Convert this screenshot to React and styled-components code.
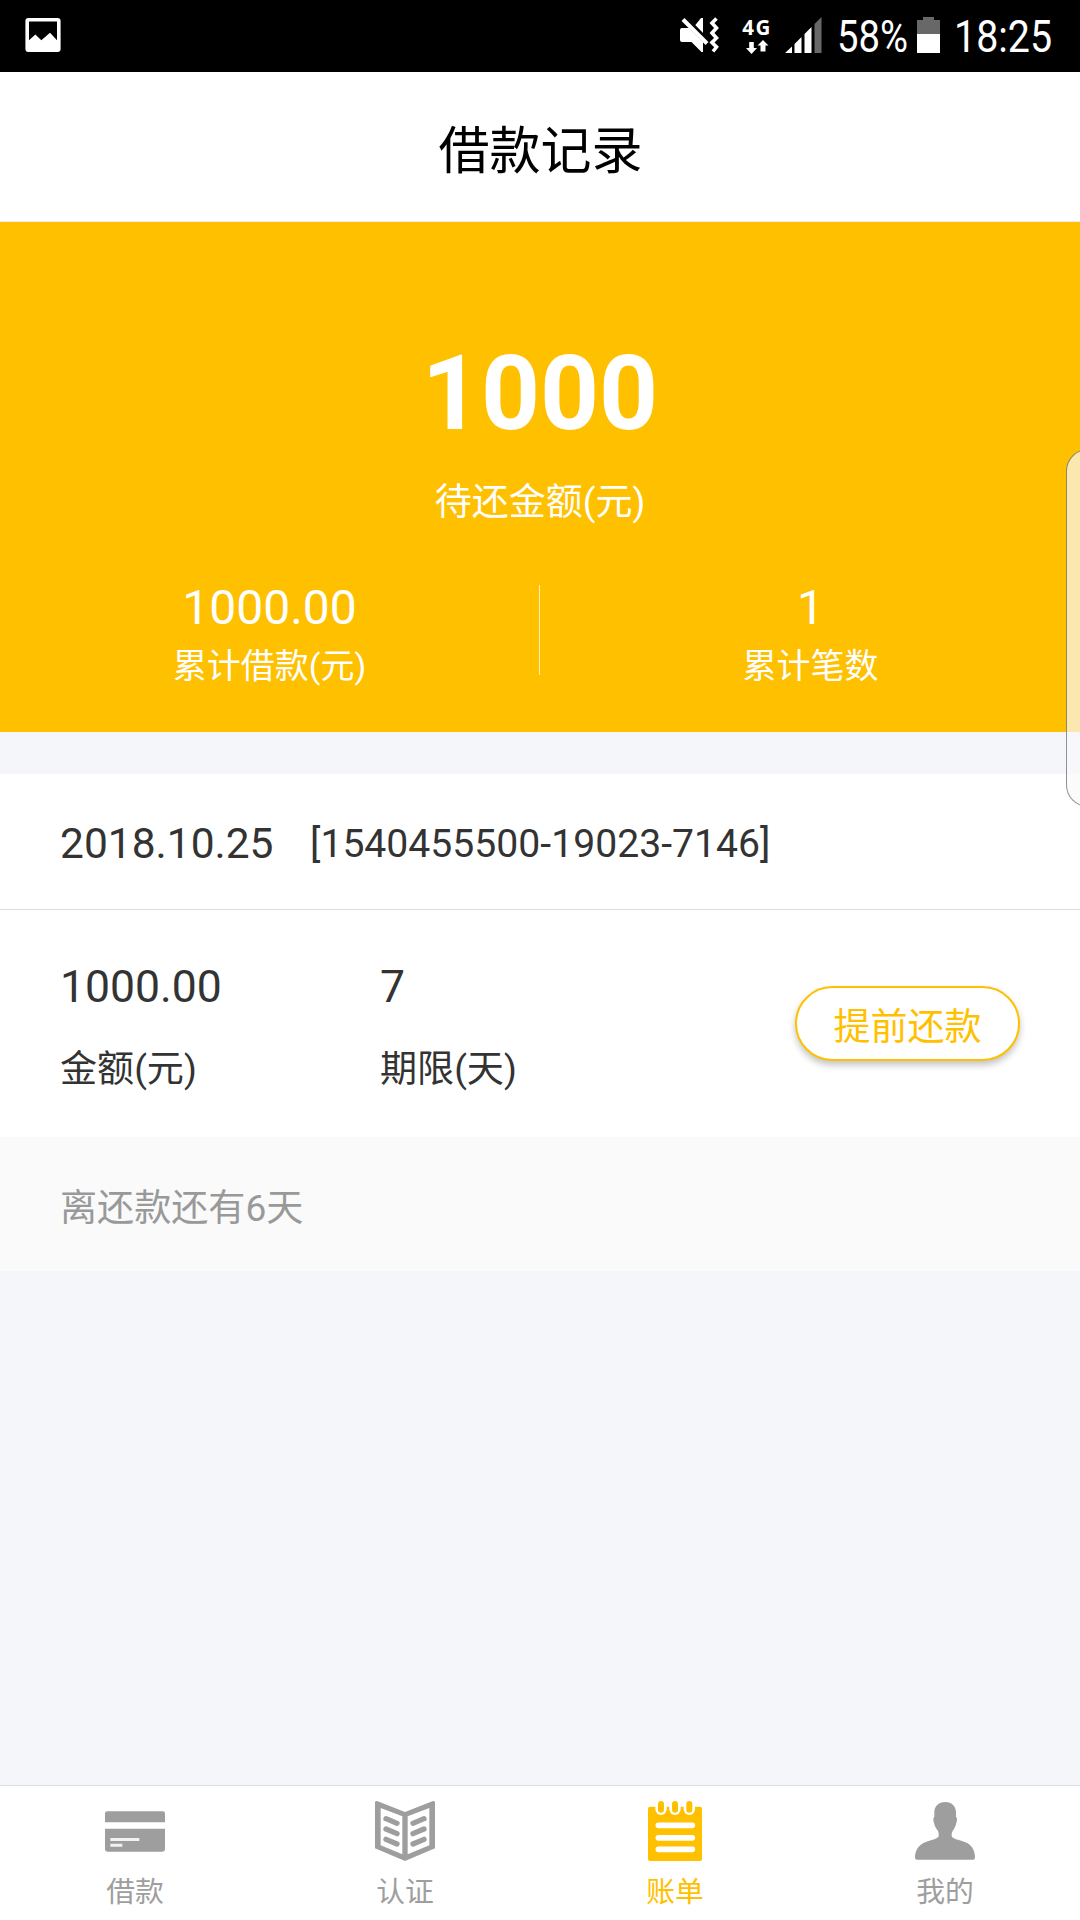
import styled, { createGlobalStyle } from 'styled-components';

const GlobalStyle = createGlobalStyle`
  * {
    box-sizing: border-box;
  }
  body {
    --primary-clr: #ffc000;
    --text-clr: #333;
    --muted-clr: #9e9e9e;
    margin: 0;
    background: #f4f6fa;
    font-family: Roboto, 'Noto Sans CJK SC', sans-serif;
    color: var(--text-clr);
  }
`;

const Screen = styled.div`
  position: relative;
  display: flex;
  flex-direction: column;
  width: 1080px;
  height: 1920px;
  overflow: hidden;

  svg {
    display: block;
    flex: none;
  }
`;

const StatusBar = styled.div`
  display: flex;
  align-items: center;
  height: 72px;
  padding: 0 28px 2px 25px;
  background: #000;
  color: #fff;
`;

const StatusIcons = styled.div`
  display: flex;
  align-items: center;
  margin-left: auto;
`;

const Network = styled.div`
  display: flex;
  flex-direction: column;
  align-items: center;
  width: 30px;
  height: 36px;
  margin: 0 13px 0 23px;
  font-family: 'Noto Sans', sans-serif;
  font-size: 20.5px;
  font-weight: 700;
  line-height: 20px;
  letter-spacing: 1.5px;

  svg {
    margin-top: 3px;
  }
`;

/* condensed digits of the system bar */
const StatusText = styled.div`
  width: ${({ $width }) => $width}px;
  margin-left: ${({ $gap }) => $gap}px;
  font-size: 45px;
  line-height: 52px;
  white-space: nowrap;
  padding-top: 3px;

  span {
    display: inline-block;
    transform: scaleX(${({ $scale }) => $scale});
    transform-origin: left;
  }
`;

const Header = styled.header`
  display: flex;
  justify-content: center;
  height: 150px;
  padding: 45px 0 0 1px;
  background: #fff;
  border-bottom: 1px solid #eceef2;

  h1 {
    margin: 0;
    color: #000;
    font-size: 51px;
    font-weight: 400;
    line-height: 70px;
  }
`;

const Summary = styled.section`
  display: flex;
  flex-direction: column;
  align-items: center;
  height: 510px;
  padding-top: 112px;
  background: var(--primary-clr);
  color: #fff;

  .total {
    font-size: 103px;
    font-weight: 700;
    line-height: 120px;
  }
  .caption {
    margin-top: 24px;
    font-size: 37px;
    line-height: 50px;
  }
`;

const Stats = styled.div`
  display: flex;
  align-self: stretch;
  align-items: flex-start;
  margin-top: 53px;
`;

const Stat = styled.div`
  flex: 1;
  text-align: center;

  .value {
    font-size: 48px;
    line-height: 54px;
  }
  .label {
    margin-top: 8px;
    font-size: 34px;
    line-height: 46px;
  }
`;

const Divider = styled.div`
  width: 1px;
  height: 90px;
  margin: 4px 1px 0 0;
  background: rgba(255, 255, 255, 0.75);
`;

const Record = styled.article`
  margin-top: 42px;
  background: #fff;
`;

const RecordHead = styled.div`
  display: flex;
  align-items: center;
  height: 136px;
  padding: 4px 60px 0;
  border-bottom: 1px solid #dcdcdc;
  white-space: nowrap;

  .date {
    width: 250px;
    font-size: 42.5px;
  }
  .number {
    font-size: 39.15px;
  }
`;

const RecordBody = styled.div`
  display: flex;
  height: 227px;
  padding: 47px 60px 0;
`;

const Field = styled.div`
  width: ${({ $width }) => $width}px;

  .value {
    font-size: 44.5px;
    line-height: 60px;
  }
  .label {
    margin-top: 28px;
    font-size: 37.1px;
    line-height: 50px;
  }
`;

const RepayButton = styled.button`
  width: 225px;
  height: 75px;
  margin: 29px 0 0 auto;
  padding: 8px 0 0;
  border: 2px solid var(--primary-clr);
  border-radius: 38px;
  background: #fff;
  box-shadow: 0 4px 7px rgba(0, 0, 0, 0.24);
  color: var(--primary-clr);
  font: inherit;
  font-size: 37px;
  line-height: 50px;
`;

const Notice = styled.div`
  height: 134px;
  padding: 47px 60px 0;
  background: #fafafa;
  color: #999;
  font-size: 37.1px;
  line-height: 50px;
`;

const TabBar = styled.nav`
  display: flex;
  height: 135px;
  margin-top: auto;
  border-top: 1px solid #dcdfe4;
  background: #fff;
`;

const Tab = styled.div`
  display: flex;
  flex: 1;
  flex-direction: column;
  align-items: center;
  padding-top: 15px;
  color: ${({ $active }) => ($active ? 'var(--primary-clr)' : 'var(--muted-clr)')};
  font-size: 28.8px;
  line-height: 40px;

  span {
    margin-top: 11px;
  }
`;

const EdgeHandle = styled.div`
  position: absolute;
  top: 449px;
  right: -30px;
  width: 44px;
  height: 358px;
  border: 1px solid rgba(0, 0, 0, 0.42);
  border-radius: 22px;
  background: rgba(250, 250, 250, 0.7);
`;

const PictureIcon = () => (
  <svg width='36' height='34' viewBox='0 0 36 34'>
    <path
      fill='#fff'
      fillRule='evenodd'
      d='M3.4 0H32.6A3 3 0 0 1 35.6 3V31A3 3 0 0 1 32.6 34H3.4A3 3 0 0 1 .4 31V3A3 3 0 0 1 3.4 0ZM4 3.6V22.3L10.4 16.6L16.3 22.3L25 14.8L32 22.3V3.6Z'
    />
  </svg>
);

const MuteIcon = () => (
  <svg width='39' height='36' viewBox='0 0 39 36'>
    <path fill='#fff' d='M2 11H9L23 25V35H21.500L11.500 25H2A2 2 0 0 1 0 23V13A2 2 0 0 1 2 11Z' />
    <path fill='#fff' d='M15 8.500L21 1H23V16.500Z' />
    <path stroke='#000' strokeWidth='3' d='M5 0L30 25' />
    <path stroke='#fff' strokeWidth='4' d='M3 2.500L27 26.500' />
    <path
      fill='none'
      stroke='#fff'
      strokeWidth='3.6'
      d='M36.500 1.500L32 6L36.500 11L32 16L36.500 21L32 25.500L36.500 30L33 34.500'
    />
  </svg>
);

const DataArrows = () => (
  <svg width='23' height='14' viewBox='0 0 23 14'>
    <path fill='#fff' d='M3.200 2H7.800V8H11L5.500 14L0 8H3.200Z' />
    <path fill='#fff' d='M17 0L22.500 5.500H19.500V11.500H14.500V5.500H11.500Z' />
  </svg>
);

const SignalIcon = () => (
  <svg width='37' height='36' viewBox='0 0 37 36'>
    <path fill='#fff' d='M0 36L7 29.500V36ZM9.500 27L16.500 20V36H9.500ZM19.500 17L26.500 10V36H19.500Z' />
    <path fill='#686868' d='M29.500 7L36.500 0V36H29.500Z' />
  </svg>
);

const BatteryIcon = () => (
  <svg width='23' height='36' viewBox='0 0 23 36'>
    <path fill='#686868' d='M6 0H17V3H23V17H0V3H6Z' />
    <path fill='#fff' d='M0 17H23V36H0Z' />
  </svg>
);

const CardIcon = () => (
  <svg width='60' height='60' viewBox='0 0 180 180'>
    <path
      fill='currentColor'
      d='M0 64V38Q0 31 7 31H173Q180 31 180 38V64ZM0 83H180V145Q180 152 173 152H7Q0 152 0 145Z'
    />
    <path stroke='#f2f2f2' strokeWidth='9' d='M16 115.500H103M16 132.500H52' />
  </svg>
);

const BookIcon = () => (
  <svg width='60' height='60' viewBox='0 0 180 180'>
    <path
      fill='currentColor'
      fillRule='evenodd'
      d='M0 3Q2 -1 8 1L90 33L172 1Q178 -1 180 3V142L90 180L0 142ZM17 21V133L82 160V46ZM163 21L98 46V160L163 133Z'
    />
    <path
      stroke='currentColor'
      strokeWidth='16'
      strokeLinecap='round'
      d='M33 53L66 67M33 84L66 98M33 115L66 129M147 53L114 67M147 84L114 98M147 115L114 129'
    />
  </svg>
);

const BillIcon = () => (
  <svg width='60' height='60' viewBox='0 0 180 180'>
    <rect x='9' y='17' width='162' height='163' rx='6' fill='currentColor' />
    {/* notches, then the binder rings inside them */}
    {[48, 90, 133].map((x) => (
      <g key={x}>
        <rect x={x - 17} y='-10' width='34' height='52' rx='17' fill='#fff' />
        <rect x={x - 9} y='0' width='18' height='35' rx='9' fill='currentColor' />
      </g>
    ))}
    <path
      stroke='#fff'
      strokeWidth='17'
      strokeLinecap='round'
      d='M40 73H142M40 110.500H142M40 145H142'
    />
  </svg>
);

const UserIcon = () => (
  <svg width='60' height='60' viewBox='0 0 180 180'>
    <path
      fill='currentColor'
      d='M91 3C70 3 58 17 58 34V48C54 50 55 60 58 69C60 82 71 88 71 98V106C66 116 42 118 24 127C8 136 0 152 0 170Q0 176 6 176H174Q180 176 180 170C180 152 173 136 158 127C140 118 115 116 110 106V98C112 88 121 82 123 69C127 60 127 50 123 48V34C123 17 111 3 91 3Z'
    />
  </svg>
);

const tabs = [
  { label: '借款', Icon: CardIcon },
  { label: '认证', Icon: BookIcon },
  { label: '账单', Icon: BillIcon, active: true },
  { label: '我的', Icon: UserIcon },
];

const App = () => {
  return (
    <>
      <GlobalStyle />
      <Screen>
        <StatusBar>
          <PictureIcon />
          <StatusIcons>
            <MuteIcon />
            <Network>
              4G
              <DataArrows />
            </Network>
            <SignalIcon />
            <StatusText $width={80} $gap={15} $scale={0.85}>
              <span>58%</span>
            </StatusText>
            <BatteryIcon />
            <StatusText $width={98} $gap={14} $scale={0.875}>
              <span>18:25</span>
            </StatusText>
          </StatusIcons>
        </StatusBar>
        <Header>
          <h1>借款记录</h1>
        </Header>
        <Summary>
          <div className='total'>1000</div>
          <div className='caption'>待还金额(元)</div>
          <Stats>
            <Stat>
              <div className='value'>1000.00</div>
              <div className='label'>累计借款(元)</div>
            </Stat>
            <Divider />
            <Stat>
              <div className='value'>1</div>
              <div className='label'>累计笔数</div>
            </Stat>
          </Stats>
        </Summary>
        <Record>
          <RecordHead>
            <span className='date'>2018.10.25</span>
            <span className='number'>[1540455500-19023-7146]</span>
          </RecordHead>
          <RecordBody>
            <Field $width={320}>
              <div className='value'>1000.00</div>
              <div className='label'>金额(元)</div>
            </Field>
            <Field $width={200}>
              <div className='value'>7</div>
              <div className='label'>期限(天)</div>
            </Field>
            <RepayButton>提前还款</RepayButton>
          </RecordBody>
          <Notice>离还款还有6天</Notice>
        </Record>
        <TabBar>
          {tabs.map(({ label, Icon, active }) => (
            <Tab key={label} $active={active}>
              <Icon />
              <span>{label}</span>
            </Tab>
          ))}
        </TabBar>
        <EdgeHandle />
      </Screen>
    </>
  );
};

export default App;
